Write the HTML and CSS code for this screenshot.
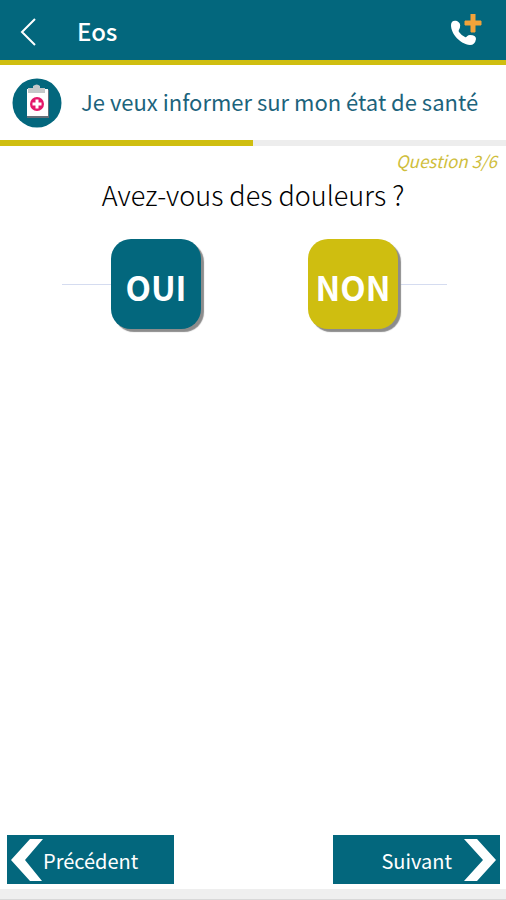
FILE: index.html
```html
<!DOCTYPE html>
<html lang="fr">
<head>
<meta charset="utf-8">
<meta name="viewport" content="width=device-width, initial-scale=1">
<title>Eos</title>
<link rel="stylesheet" href="styles.css">
</head>
<body>
<div class="app">
  <header class="topbar">
    <button class="icon-button" type="button" aria-label="Retour">
      <svg width="18" height="30" viewBox="0 0 18 30"><path d="M15 3 2 16 15 29" fill="none" stroke="#fff" stroke-width="2"/></svg>
    </button>
    <h1 class="topbar-title">Eos</h1>
    <button class="icon-button" type="button" aria-label="Appel d'urgence">
      <svg width="32" height="34" viewBox="0 0 32 34">
        <path d="M1 11C1 7 4 6 7 7Q11 9 10 13C10 15 8 16 9 18Q11 21 15 23C17 24 17 21 20 21Q26 21 26 25Q25 31 20 31C10 30 1 20 1 11Z" fill="#fff"/>
        <path d="M21 0h4v7h6v4h-6v7h-4v-7h-6V7h6z" fill="#f2a33a" stroke="#f2a33a" stroke-width="1"/>
      </svg>
    </button>
  </header>
  <section class="subject">
    <svg class="subject-icon" width="50" height="50" viewBox="0 0 50 50">
      <circle cx="25" cy="25" r="24.5" fill="#03677d"/>
      <path d="M15 12h22v28H15z" fill="#656f78"/>
      <path d="M15 11h21v27H15z" fill="#fff"/>
      <path d="M16 10h5V8q4-3 7 0v2h5v5H16z" fill="#c4c8c9"/>
      <circle cx="25" cy="26" r="7" fill="#e4186a"/>
      <path d="M23.500 21.500h3v3h3v3h-3v3h-3v-3h-3v-3h3z" fill="#fff"/>
    </svg>
    <h2 class="subject-title">Je veux informer sur mon état de santé</h2>
  </section>
  <div class="progress" role="progressbar" aria-valuemin="0" aria-valuemax="6" aria-valuenow="3" aria-label="Progression"><div class="progress-fill"></div></div>
  <main class="content">
    <p class="counter">Question 3/6</p>
    <h3 class="question">Avez-vous des douleurs ?</h3>
    <div class="answers">
      <span class="rule"></span>
      <button class="answer yes" type="button">OUI</button>
      <span class="between"></span>
      <button class="answer no" type="button">NON</button>
      <span class="rule"></span>
    </div>
  </main>
  <nav class="pager">
    <button class="page-button" type="button">
      <svg width="32" height="44" viewBox="0 0 32 44"><path d="M19 1h13L14 22l17 21H19L0 22z" fill="#fff"/></svg>
      <span>Précédent</span>
    </button>
    <button class="page-button next" type="button">
      <span>Suivant</span>
      <svg width="32" height="44" viewBox="0 0 32 44"><path d="M13 1H0l19 21L0 43h13L32 22z" fill="#fff"/></svg>
    </button>
  </nav>
  <div class="bottom-edge"></div>
</div>
</body>
</html>
```
FILE: styles.css
```css
* { box-sizing: border-box; }
body {
  margin: 0;
  background: #fff;
  font-family: "Noto Sans CJK JP", "Noto Sans", sans-serif;
  font-weight: 400;
}
h1, h2, h3, p { margin: 0; font-weight: 400; }
button { border: 0; padding: 0; font: inherit; color: #fff; cursor: pointer; }
svg { display: block; flex: none; }
.app { min-height: 100vh; display: flex; flex-direction: column; }
.topbar {
  display: flex;
  align-items: center;
  height: 65px;
  padding: 2px 24px 0 20px;
  background: #03677d;
  border-bottom: 5px solid #cfbe10;
}
.icon-button { background: none; }
.topbar-title {
  flex: 1;
  margin-left: 39px;
  font-size: 24px;
  line-height: 32px;
  font-weight: 500;
  color: #fff;
}
.subject {
  display: flex;
  align-items: center;
  gap: 19px;
  height: 75px;
  padding: 0 12px;
}
.subject-title { padding-bottom: 3px; font-size: 22px; line-height: 32px; color: #1c637c; }
.progress { height: 6px; background: #ededed; }
.progress-fill { width: 50%; height: 100%; background: #cfbe10; }
.content { flex: 1; }
.counter {
  padding: 3px 9px 0 0;
  font-size: 17px;
  line-height: 24px;
  font-style: italic;
  text-align: right;
  color: #cfbe3c;
}
.question { padding-top: 2px; font-size: 27px; line-height: 40px; font-weight: 300; text-align: center; color: #000; }
.answers { display: flex; align-items: center; padding: 24px 59px 0 62px; }
.rule { flex: 1; height: 1px; background: #d5dcf0; }
.between { width: 107px; }
.answer {
  z-index: 1;
  width: 90px;
  height: 90px;
  padding-top: 6px;
  border-radius: 20px;
  box-shadow: 3px 3px 1px #8c8c8c;
  font-size: 33px;
  line-height: 40px;
  font-weight: 700;
}
.yes { background: #03677d; }
.no { background: #cfbe10; }
.pager { display: flex; justify-content: space-between; padding: 0 6px 5px 7px; }
.page-button {
  display: flex;
  align-items: center;
  width: 167px;
  height: 49px;
  padding: 0 4px;
  background: #03677d;
  font-size: 20px;
  line-height: 32px;
}
.next { justify-content: flex-end; gap: 12px; }
.page-button span { padding-top: 2px; }
.bottom-edge { height: 11px; background: #efefef; border-bottom: 1px solid #d8d8d8; }
```
